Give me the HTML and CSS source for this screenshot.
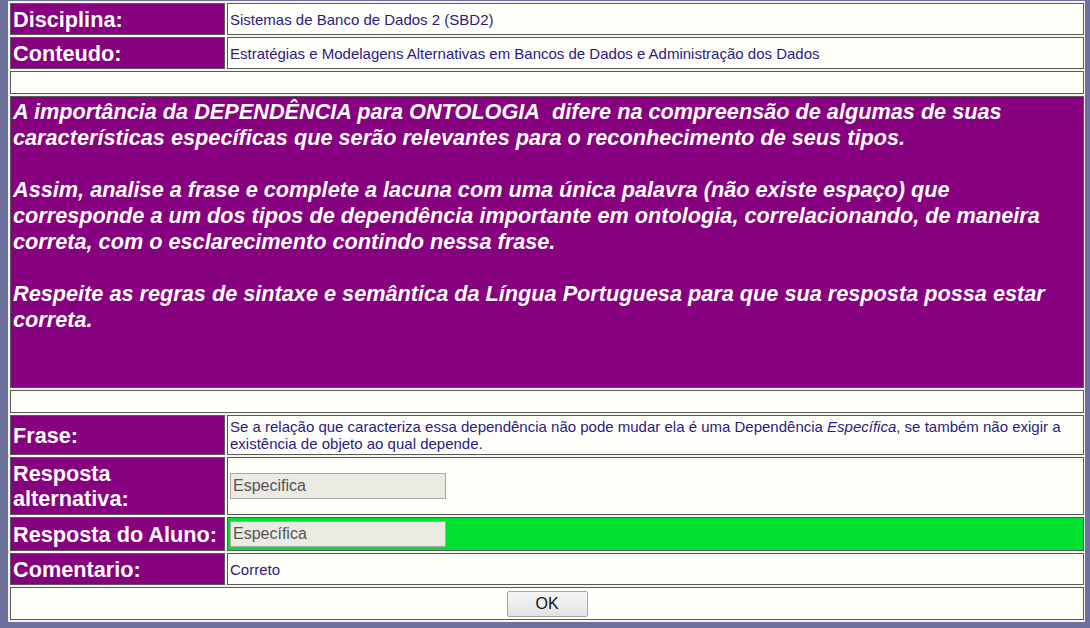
FILE: index.html
```html
<!DOCTYPE html>
<html lang="pt">
<head>
<meta charset="utf-8">
<title>Questão</title>
<link rel="stylesheet" href="styles.css">
</head>
<body>
<table class="sheet">
  <tr class="r-short">
    <td class="label">Disciplina:</td>
    <td class="value">Sistemas de Banco de Dados 2 (SBD2)</td>
  </tr>
  <tr class="r-short">
    <td class="label">Conteudo:</td>
    <td class="value">Estratégias e Modelagens Alternativas em Bancos de Dados e Administração dos Dados</td>
  </tr>
  <tr class="r-blank"><td class="value" colspan="2"></td></tr>
  <tr>
    <td class="statement" colspan="2">
      <p>A importância da DEPENDÊNCIA para ONTOLOGIA&nbsp; difere na compreensão de algumas de suas características específicas que serão relevantes para o reconhecimento de seus tipos.</p>
      <p>Assim, analise a frase e complete a lacuna com uma única palavra (não existe espaço) que corresponde a um dos tipos de dependência importante em ontologia, correlacionando, de maneira correta, com o esclarecimento contindo nessa frase.</p>
      <p class="last">Respeite as regras de sintaxe e semântica da Língua Portuguesa para que sua resposta possa estar correta.</p>
    </td>
  </tr>
  <tr class="r-blank"><td class="value" colspan="2"></td></tr>
  <tr class="r-frase">
    <td class="label">Frase:</td>
    <td class="value">Se a relação que caracteriza essa dependência não pode mudar ela é uma Dependência <i>Específica</i>, se também não exigir a existência de objeto ao qual depende.</td>
  </tr>
  <tr class="r-alt">
    <td class="label">Resposta alternativa:</td>
    <td class="value"><input class="answer" type="text" value="Especifica" readonly></td>
  </tr>
  <tr class="r-aluno">
    <td class="label">Resposta do Aluno:</td>
    <td class="value correct"><input class="answer" type="text" value="Específica" readonly></td>
  </tr>
  <tr class="r-short">
    <td class="label">Comentario:</td>
    <td class="value">Correto</td>
  </tr>
  <tr class="r-ok">
    <td class="value center" colspan="2"><button class="ok" type="button">OK</button></td>
  </tr>
</table>
</body>
</html>
```

FILE: styles.css
```css
html, body {
  background: #6c709b;
}
body {
  margin: 1px 5px 0 8px;
  font-family: "Liberation Sans", Arial, sans-serif;
}
.sheet {
  width: 1078px;
  border-collapse: separate;
  border-spacing: 2px;
  border: 0;
  background: #f4f4f4;
}
.sheet td {
  border: 1px solid #5a5a5a;
  padding: 2px;
  vertical-align: middle;
}
.label {
  width: 209px;
  background: #870080;
  color: #ffffff;
  font-size: 21.7px;
  font-weight: bold;
  line-height: 25px;
}
.value {
  background: #fffffa;
  color: #2b1a84;
  font-size: 15px;
  line-height: 17px;
}
.r-short td { height: 26px; }
.r-blank td { height: 17px; }
.r-frase td { height: 34px; }
.r-alt td { height: 52px; }
.r-aluno td { height: 28px; }
.r-ok td { height: 27px; }

.statement {
  background: #870080;
  color: #ffffff;
  font-size: 21.7px;
  font-weight: bold;
  font-style: italic;
  line-height: 26px;
  vertical-align: top;
}
.statement p {
  margin: 0 0 26px 0;
}
.statement p.last {
  margin-bottom: 52px;
}
.correct {
  background: #00e030;
}
.answer {
  display: block;
  box-sizing: border-box;
  width: 216px;
  height: 26px;
  margin: 0;
  padding: 0 2px;
  border: 1px solid #a8a8a8;
  background: #ebebe4;
  color: #545454;
  font-family: "Liberation Sans", Arial, sans-serif;
  font-size: 16px;
}
.center {
  text-align: center;
}
.ok {
  box-sizing: border-box;
  width: 81px;
  height: 26px;
  border: 1px solid #a6a6a6;
  border-radius: 2px;
  background: linear-gradient(#f6f6f6, #e2e2e2);
  color: #111111;
  font-family: "Liberation Sans", Arial, sans-serif;
  font-size: 16px;
  padding: 0;
}
```
